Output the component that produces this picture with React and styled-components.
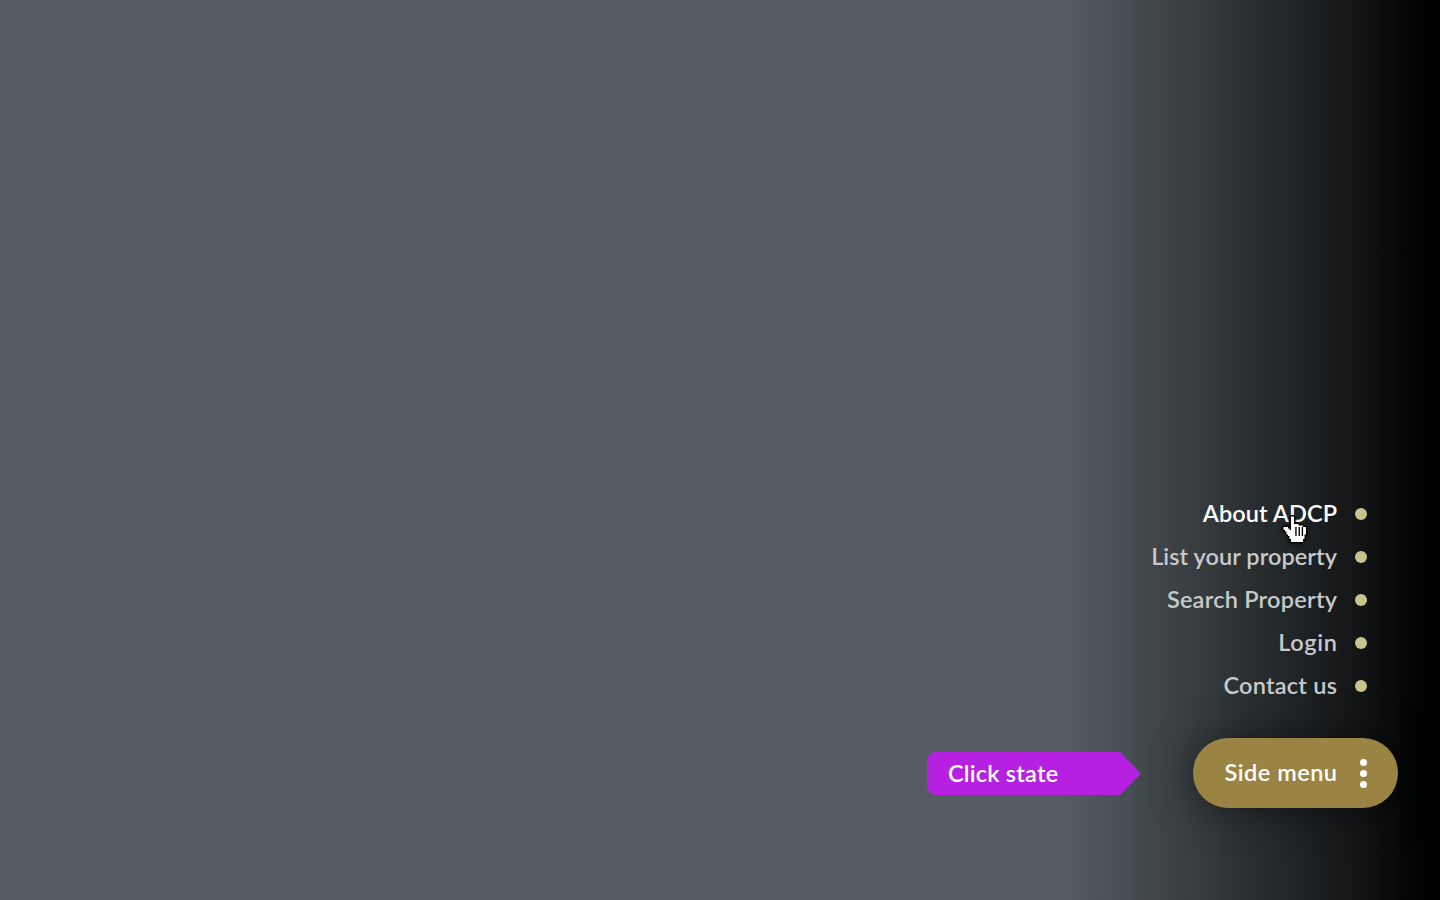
import React from 'react';
import styled, { createGlobalStyle } from 'styled-components';

const Global = createGlobalStyle`
  * { box-sizing: border-box; }
  body { margin: 0; background: #545b62; font-family: Lato, "Liberation Sans", sans-serif; overflow: hidden; }
`;

const Page = styled.main`
  height: 900px;
  display: flex;
  justify-content: flex-end;
  align-items: flex-end;
  padding: 0 42px 92px 0;
  background: linear-gradient(90deg, #545b62 1062px, #454d55 1132px, #434a4c 1138px, #32383b 1215px, #292e30 1252px, #1d2225 1305px, #191b1d 1330px, #131416 1360px, #090a0c 1393px, #050706 1404px, #000 1428px);
`;

const Stack = styled.div`
  display: flex;
  flex-direction: column;
  align-items: flex-end;
  gap: 31px;
`;

const Menu = styled.nav`
  display: flex;
  flex-direction: column;
  align-items: flex-end;
  padding-right: 31px;
`;

const MenuItem = styled.a`
  display: flex;
  align-items: center;
  gap: 18px;
  height: 43px;
  color: ${(p) => (p.$active ? '#fff' : '#c8c9ca')};

  &::after {
    content: '';
    width: 12px;
    height: 12px;
    border-radius: 50%;
    background: #c9c38c;
  }
`;

const Label = styled.span`
  position: relative;
  padding-bottom: 2px;
  font-size: 23.5px;
  font-weight: 600;
  line-height: 30px;
  white-space: nowrap;
  letter-spacing: ${(p) => p.$tracking || 0}px;
  margin-right: ${(p) => -(p.$tracking || 0)}px;
`;

const Cursor = styled.svg`
  position: absolute;
  left: 79.5px;
  top: 17px;
  width: 27px;
  height: 30px;
  overflow: visible;
  filter: drop-shadow(0 1px 2px rgba(0, 0, 0, 0.5));
`;

const Actions = styled.div`
  display: flex;
  align-items: center;
  gap: 52px;
`;

const Tag = styled.div`
  display: flex;
  align-items: center;
  width: 214px;
  height: 43px;
  margin-top: 1px;
  padding-left: 21px;
  color: #fff;
  background: #b620e0;
  border-radius: 9px 0 0 9px;
  clip-path: polygon(0 0, 193px 0, 100% 50%, 193px 100%, 0 100%);
`;

const MenuButton = styled.button`
  display: flex;
  align-items: center;
  justify-content: flex-end;
  gap: 23px;
  width: 205px;
  height: 70px;
  padding: 0 31px 0 0;
  border: 0;
  border-radius: 35px;
  color: #fff;
  background: #9b8443;
  font-family: inherit;
  box-shadow: 0 2px 40px rgba(0, 0, 0, 0.5);
`;

const Dots = styled.span`
  display: flex;
  flex-direction: column;
  gap: 4px;
`;

const Dot = styled.i`
  width: 7px;
  height: 7px;
  border-radius: 50%;
  background: #fff;
`;

const items = [
  { text: 'About ADCP', active: true, tracking: 0.06 },
  { text: 'List your property', tracking: 0.06 },
  { text: 'Search Property', tracking: 0.24 },
  { text: 'Login', tracking: 0.65 },
  { text: 'Contact us', tracking: 0.25 },
];

const hand = 'M5 0h2v5h3v1h3v1h2v5h-1v3h-1v2H5v-2H4v-2H3v-1H2v-2H1V9H0V7h3v1h1v1h1z';

export default function App() {
  return (
    <Page>
      <Global />
      <Stack>
        <Menu>
          {items.map((item) => (
            <MenuItem key={item.text} $active={item.active}>
              <Label $tracking={item.tracking}>
                {item.text}
                {item.active && (
                  <Cursor viewBox="-1 -1 18 20">
                    <path d={hand} fill="#000" stroke="#000" strokeWidth="2" strokeLinejoin="bevel" />
                    <path d={hand} fill="#fff" />
                    <path d="M8.300 7v6M10.500 7v6M12.600 7v6" stroke="#000" strokeWidth="0.9" />
                  </Cursor>
                )}
              </Label>
            </MenuItem>
          ))}
        </Menu>
        <Actions>
          <Tag><Label $tracking={0.21}>Click state</Label></Tag>
          <MenuButton>
            <Label $tracking={0.5}>Side menu</Label>
            <Dots><Dot /><Dot /><Dot /></Dots>
          </MenuButton>
        </Actions>
      </Stack>
    </Page>
  );
}
